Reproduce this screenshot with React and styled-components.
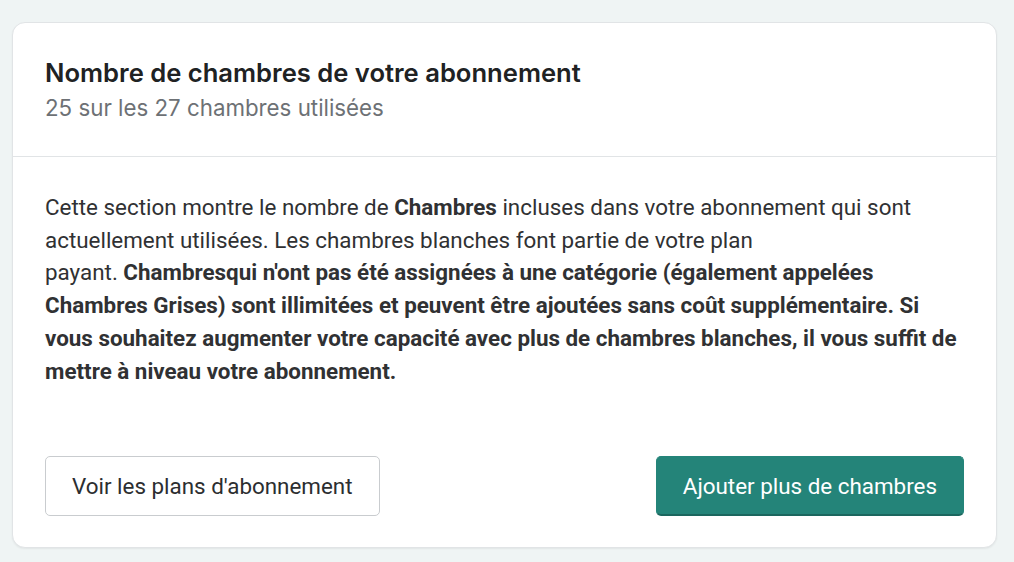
import React from "react";
import styled, { createGlobalStyle } from "styled-components";

const Global = createGlobalStyle`
  html, body { margin: 0; padding: 0; }
  body {
    background: #eff4f4;
    font-family: Roboto, "Liberation Sans", sans-serif;
    -webkit-font-smoothing: antialiased;
  }
`;

const Page = styled.div`
  padding: 22px 17px 13px 12px;
`;

const Card = styled.section`
  background: #fff;
  border: 1px solid #e1e4e6;
  border-radius: 13px;
  box-shadow: 0 1px 2px rgba(0, 0, 0, 0.06);
  overflow: hidden;
`;

const Header = styled.header`
  padding: 35px 32px 35px;
  border-bottom: 1px solid #e1e4e6;
  display: flex;
  flex-direction: column;
  gap: 7px;
`;

const Title = styled.h2`
  margin: 0;
  font-family: Inter, "Noto Sans", sans-serif;
  font-size: 25.6px;
  font-weight: 600;
  line-height: 30px;
  color: #202223;
`;

const Subtitle = styled.p`
  margin: 0;
  font-family: Inter, "Noto Sans", sans-serif;
  font-size: 22.3px;
  line-height: 26px;
  color: #6d7175;
`;

const Body = styled.div`
  padding: 34px 32px 31px;
  display: flex;
  flex-direction: column;
  gap: 69px;
`;

const Text = styled.p`
  margin: 0;
  font-size: 22.4px;
  line-height: 32.7px;
  color: #303133;
`;

const Actions = styled.div`
  display: flex;
  justify-content: space-between;
  align-items: center;
`;

const Button = styled.button`
  height: 60px;
  padding: 0 26px;
  font-family: Roboto, "Liberation Sans", sans-serif;
  font-size: 22.4px;
  border-radius: 5px;
  cursor: pointer;
  border: 1px solid ${(p) => (p.$primary ? "#248479" : "#c9cccf")};
  border-bottom: ${(p) => (p.$primary ? "2px solid #1b665e" : "1px solid #c9cccf")};
  background: ${(p) => (p.$primary ? "#248479" : "#fff")};
  color: ${(p) => (p.$primary ? "#fff" : "#2c2e30")};
`;

export default function App() {
  return (
    <>
      <Global />
      <Page>
        <Card>
          <Header>
            <Title>Nombre de chambres de votre abonnement</Title>
            <Subtitle>25 sur les 27 chambres utilisées</Subtitle>
          </Header>
          <Body>
            <Text>
              Cette section montre le nombre de <b>Chambres</b> incluses dans
              votre abonnement qui sont actuellement utilisées. Les chambres
              blanches font partie de votre plan
              <br />
              payant.{" "}
              <b>
                Chambresqui n'ont pas été assignées à une catégorie (également
                appelées Chambres Grises) sont illimitées et peuvent être
                ajoutées sans coût supplémentaire. Si vous souhaitez augmenter
                votre capacité avec plus de chambres blanches, il vous suffit de
                mettre à niveau votre abonnement.
              </b>
            </Text>
            <Actions>
              <Button>Voir les plans d'abonnement</Button>
              <Button $primary>Ajouter plus de chambres</Button>
            </Actions>
          </Body>
        </Card>
      </Page>
    </>
  );
}
